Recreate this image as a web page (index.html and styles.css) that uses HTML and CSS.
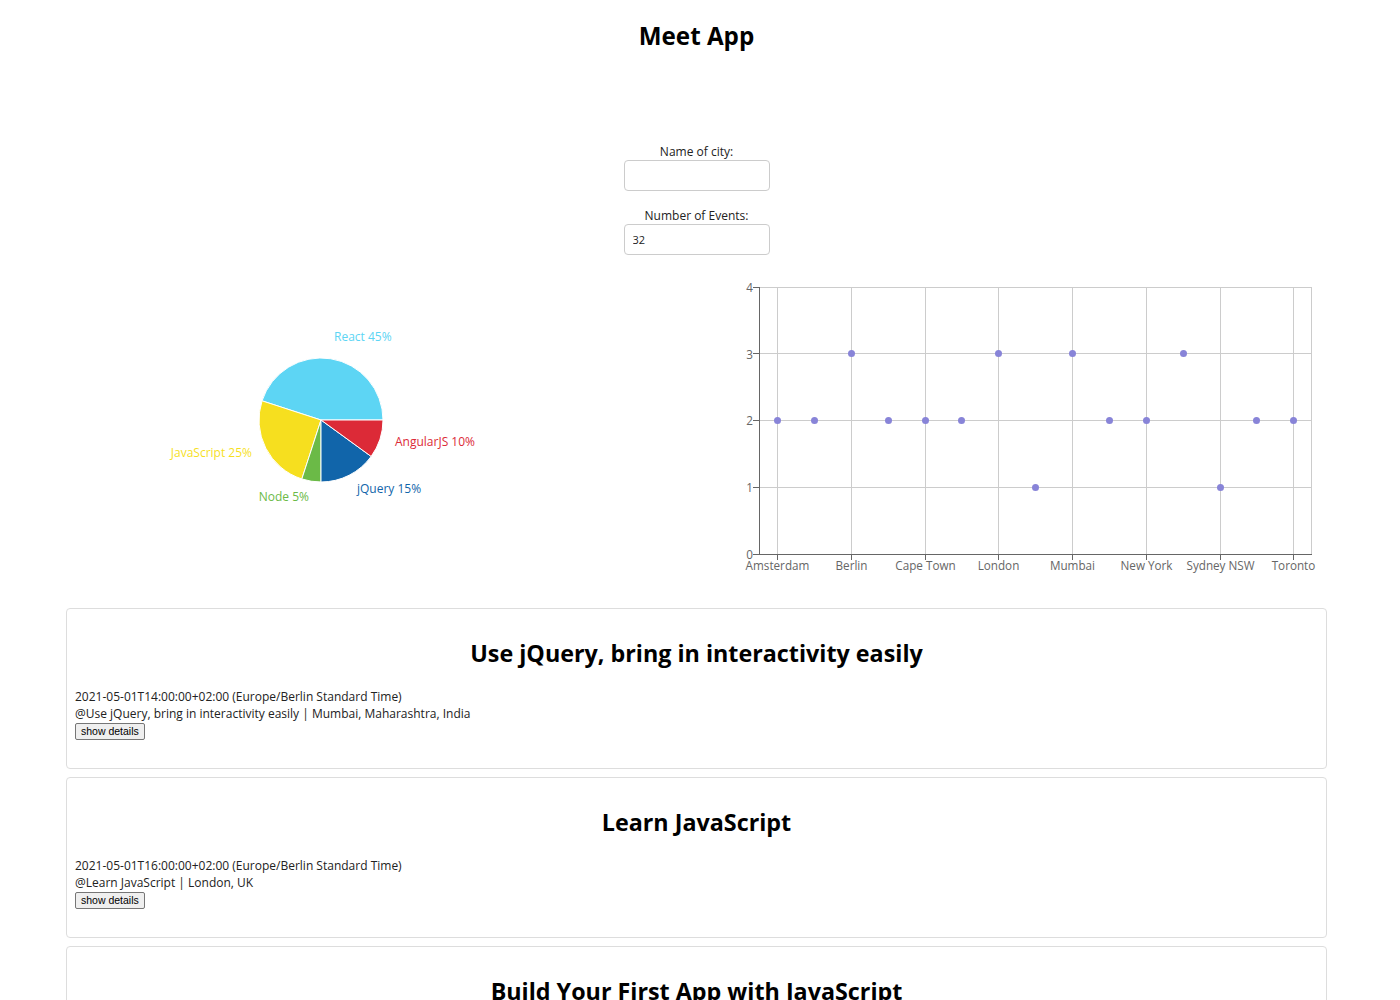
FILE: index.html
```html
<!DOCTYPE html>
<html>
<head>
<meta charset="utf-8">
<title>Meet App</title>
<link rel="stylesheet" href="styles.css">
</head>
<body>
<div class="app">
  <h1 class="app-title">Meet App</h1>
  <div class="search">
    <label class="field">
      <span class="field-label">Name of city:</span>
      <input class="field-input" type="text" value="">
    </label>
    <label class="field">
      <span class="field-label">Number of Events:</span>
      <input class="field-input" type="text" value="32">
    </label>
  </div>
  <div class="charts">
    <svg class="chart" width="696" height="330" viewBox="0 0 696 330">
      <g stroke="#fff" stroke-width="1">
        <path d="M321,150 L383,150 A62,62 0 0 0 262.03,130.84 Z" fill="#5dd5f4"/>
        <path d="M321,150 L262.03,130.84 A62,62 0 0 0 301.84,208.97 Z" fill="#f6df1f"/>
        <path d="M321,150 L301.84,208.97 A62,62 0 0 0 321,212 Z" fill="#6bba47"/>
        <path d="M321,150 L321,212 A62,62 0 0 0 371.16,186.44 Z" fill="#1165aa"/>
        <path d="M321,150 L371.16,186.44 A62,62 0 0 0 383,150 Z" fill="#dc2a37"/>
      </g>
      <g class="pie-label" dominant-baseline="central">
        <text x="334" y="66" fill="#5dd5f4">React 45%</text>
        <text x="395" y="171" fill="#dc2a37">AngularJS 10%</text>
        <text x="357" y="218" fill="#1165aa">jQuery 15%</text>
        <text x="309" y="226" fill="#6bba47" text-anchor="end">Node 5%</text>
        <text x="252" y="182" fill="#f6df1f" text-anchor="end">JavaScript 25%</text>
      </g>
    </svg>
    <svg class="chart" width="697" height="330" viewBox="0 0 697 330">
      <g stroke="#ccc" stroke-width="1" fill="none">
        <line x1="63" y1="17.5" x2="616" y2="17.5"/>
        <line x1="63" y1="83.5" x2="616" y2="83.5"/>
        <line x1="63" y1="150.5" x2="616" y2="150.5"/>
        <line x1="63" y1="217.5" x2="616" y2="217.5"/>
        <line x1="81.5" y1="17" x2="81.5" y2="284"/>
        <line x1="155.5" y1="17" x2="155.5" y2="284"/>
        <line x1="229.5" y1="17" x2="229.5" y2="284"/>
        <line x1="302.5" y1="17" x2="302.5" y2="284"/>
        <line x1="376.5" y1="17" x2="376.5" y2="284"/>
        <line x1="450.5" y1="17" x2="450.5" y2="284"/>
        <line x1="524.5" y1="17" x2="524.5" y2="284"/>
        <line x1="597.5" y1="17" x2="597.5" y2="284"/>
        <line x1="615.5" y1="17" x2="615.5" y2="284"/>
      </g>
      <g stroke="#666" stroke-width="1">
        <line x1="63.5" y1="17" x2="63.5" y2="284"/>
        <line x1="63" y1="284.5" x2="616" y2="284.5"/>
        <line x1="57" y1="17.5" x2="63" y2="17.5"/>
        <line x1="57" y1="83.5" x2="63" y2="83.5"/>
        <line x1="57" y1="150.5" x2="63" y2="150.5"/>
        <line x1="57" y1="217.5" x2="63" y2="217.5"/>
        <line x1="57" y1="284.5" x2="63" y2="284.5"/>
        <line x1="81.5" y1="284" x2="81.5" y2="290"/>
        <line x1="155.5" y1="284" x2="155.5" y2="290"/>
        <line x1="229.5" y1="284" x2="229.5" y2="290"/>
        <line x1="302.5" y1="284" x2="302.5" y2="290"/>
        <line x1="376.5" y1="284" x2="376.5" y2="290"/>
        <line x1="450.5" y1="284" x2="450.5" y2="290"/>
        <line x1="524.5" y1="284" x2="524.5" y2="290"/>
        <line x1="597.5" y1="284" x2="597.5" y2="290"/>
      </g>
      <g class="axis-label" text-anchor="end" dominant-baseline="central">
        <text x="57" y="17">4</text>
        <text x="57" y="84">3</text>
        <text x="57" y="150">2</text>
        <text x="57" y="217">1</text>
        <text x="57" y="284">0</text>
      </g>
      <g class="axis-label" text-anchor="middle" dominant-baseline="central">
        <text x="81.5" y="295">Amsterdam</text>
        <text x="155.5" y="295">Berlin</text>
        <text x="229.5" y="295">Cape Town</text>
        <text x="302.5" y="295">London</text>
        <text x="376.5" y="295">Mumbai</text>
        <text x="450.5" y="295">New York</text>
        <text x="524.5" y="295">Sydney NSW</text>
        <text x="597.5" y="295">Toronto</text>
      </g>
      <g fill="#8884d8">
        <circle cx="81.5" cy="150.5" r="3.5"/>
        <circle cx="118.5" cy="150.5" r="3.5"/>
        <circle cx="155.5" cy="83.5" r="3.5"/>
        <circle cx="192.5" cy="150.5" r="3.5"/>
        <circle cx="229.5" cy="150.5" r="3.5"/>
        <circle cx="265.5" cy="150.5" r="3.5"/>
        <circle cx="302.5" cy="83.5" r="3.5"/>
        <circle cx="339.5" cy="217.5" r="3.5"/>
        <circle cx="376.5" cy="83.5" r="3.5"/>
        <circle cx="413.5" cy="150.5" r="3.5"/>
        <circle cx="450.5" cy="150.5" r="3.5"/>
        <circle cx="487.5" cy="83.5" r="3.5"/>
        <circle cx="524.5" cy="217.5" r="3.5"/>
        <circle cx="560.5" cy="150.5" r="3.5"/>
        <circle cx="597.5" cy="150.5" r="3.5"/>
      </g>
    </svg>
  </div>
  <ul class="event-list">
    <li class="event">
      <h2 class="event-title">Use jQuery, bring in interactivity easily</h2>
      <p class="event-line">2021-05-01T14:00:00+02:00 (Europe/Berlin Standard Time)</p>
      <p class="event-line">@Use jQuery, bring in interactivity easily | Mumbai, Maharashtra, India</p>
      <button class="details-btn">show details</button>
    </li>
    <li class="event">
      <h2 class="event-title">Learn JavaScript</h2>
      <p class="event-line">2021-05-01T16:00:00+02:00 (Europe/Berlin Standard Time)</p>
      <p class="event-line">@Learn JavaScript | London, UK</p>
      <button class="details-btn">show details</button>
    </li>
    <li class="event">
      <h2 class="event-title">Build Your First App with JavaScript</h2>
      <p class="event-line">2021-05-02T14:00:00+02:00 (Europe/Berlin Standard Time)</p>
      <p class="event-line">@Build Your First App with JavaScript | London, UK</p>
      <button class="details-btn">show details</button>
    </li>
  </ul>
</div>
</body>
</html>
```
FILE: styles.css
```css
html, body {
  margin: 0;
  padding: 0;
  background: #fff;
}
body {
  font-family: "Open Sans", "Noto Sans", sans-serif;
  color: #222;
}
.app {
  width: 1393px;
  text-align: center;
}
.app-title {
  margin: 0;
  padding-top: 18px;
  height: 36px;
  line-height: 36px;
  font-size: 24.2px;
  font-weight: 700;
  color: #000;
}
.search {
  margin-top: 90px;
  display: flex;
  flex-direction: column;
  align-items: center;
  gap: 17px;
}
.field {
  display: flex;
  flex-direction: column;
  align-items: center;
}
.field-label {
  font-size: 12px;
  line-height: 16px;
  color: #222;
}
.field-input {
  box-sizing: border-box;
  width: 146px;
  height: 31px;
  margin: 0;
  padding: 0 8px;
  border: 1px solid #ccc;
  border-radius: 4px;
  font-family: "Open Sans", sans-serif;
  font-size: 11px;
  color: #222;
  outline: none;
}
.charts {
  display: flex;
  margin-top: 15px;
}
.chart {
  display: block;
}
.pie-label {
  font-family: "Open Sans", sans-serif;
  font-size: 12px;
}
.axis-label {
  font-family: "Open Sans", sans-serif;
  font-size: 11.7px;
  fill: #666;
}
.event-list {
  list-style: none;
  margin: 8px 66px 0;
  padding: 0;
  display: flex;
  flex-direction: column;
  gap: 8px;
}
.event {
  border: 1px solid #ddd;
  border-radius: 4px;
  padding: 27px 8px 28px;
  text-align: left;
}
.event-title {
  margin: 0 0 18px;
  text-align: center;
  font-size: 23.3px;
  line-height: 34px;
  font-weight: 700;
  color: #000;
}
.event-line {
  margin: 0;
  font-size: 12px;
  line-height: 17px;
  color: #222;
}
.details-btn {
  display: block;
  box-sizing: border-box;
  height: 17px;
  margin-top: 1px;
  font-family: "Liberation Sans", Arial, sans-serif;
  font-size: 10.5px;
  line-height: 13px;
  padding: 0 5px;
  background: #efefef;
  border: 1px solid #767676;
  border-radius: 2px;
  color: #000;
}
```
